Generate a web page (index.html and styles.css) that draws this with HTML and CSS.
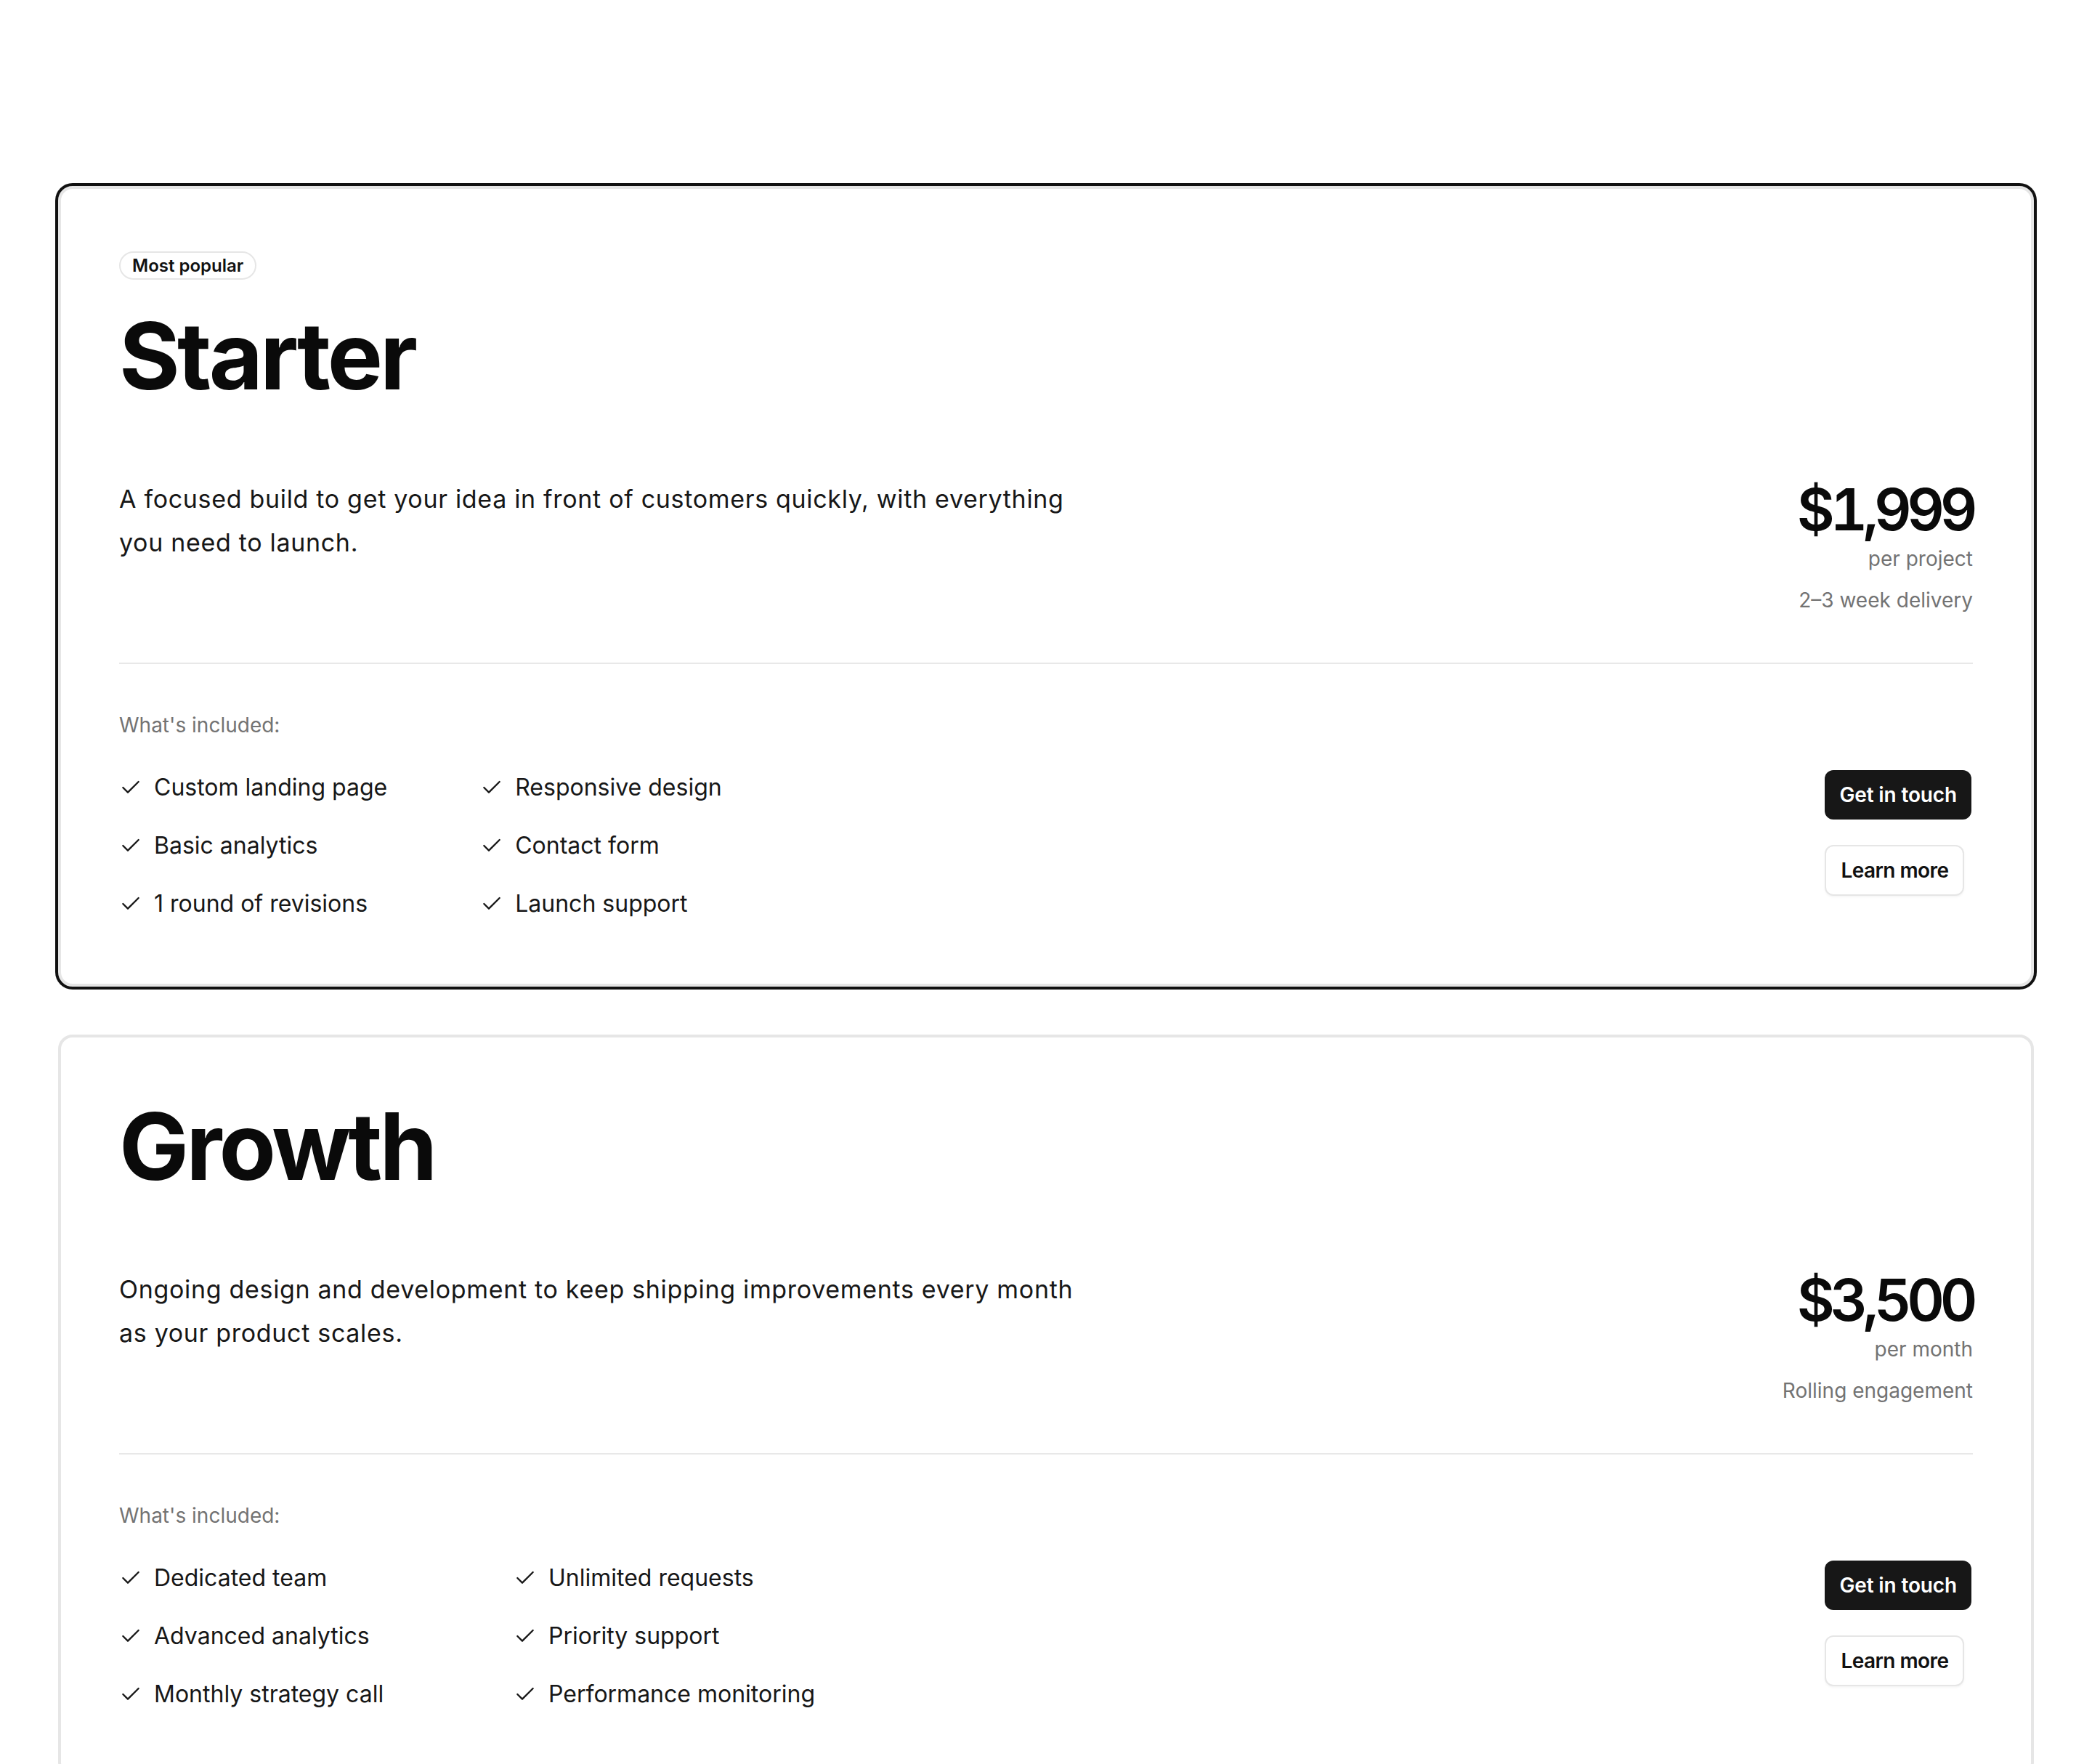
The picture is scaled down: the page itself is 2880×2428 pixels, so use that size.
FILE: index.html
```html
<!doctype html>
<html>
<head>
<meta charset="utf-8">
<title>Plans</title>
    <link rel="stylesheet" href="styles.css">
</head>
<body>
<div class="plans">
    <div class="plan plan-featured">
        <span class="plan-badge">Most popular</span>
        <h2 class="plan-name">Starter</h2>
        <div class="plan-head">
            <p class="plan-desc">A focused build to get your idea in front of customers quickly, with everything you need to launch.</p>
            <div class="plan-price">
                <div class="price-num">$1,999</div>
                <div class="price-unit">per project</div>
                <div class="price-note">2–3 week delivery</div>
            </div>
        </div>
        <div class="plan-line"></div>
        <p class="include-title">What's included:</p>
        <div class="include-row">
            <ul class="include-list">
                <li><svg class="ico-check" viewBox="0 0 24 24"><path d="M20 6 9 17l-5-5"/></svg>Custom landing page</li>
                <li><svg class="ico-check" viewBox="0 0 24 24"><path d="M20 6 9 17l-5-5"/></svg>Responsive design</li>
                <li><svg class="ico-check" viewBox="0 0 24 24"><path d="M20 6 9 17l-5-5"/></svg>Basic analytics</li>
                <li><svg class="ico-check" viewBox="0 0 24 24"><path d="M20 6 9 17l-5-5"/></svg>Contact form</li>
                <li><svg class="ico-check" viewBox="0 0 24 24"><path d="M20 6 9 17l-5-5"/></svg>1 round of revisions</li>
                <li><svg class="ico-check" viewBox="0 0 24 24"><path d="M20 6 9 17l-5-5"/></svg>Launch support</li>
            </ul>
            <div class="plan-actions">
                <a class="btn btn-dark" href="#">Get in touch</a>
                <a class="btn btn-light" href="#">Learn more</a>
            </div>
        </div>
    </div>

    <div class="plan">
        <h2 class="plan-name">Growth</h2>
        <div class="plan-head">
            <p class="plan-desc">Ongoing design and development to keep shipping improvements every month as your product scales.</p>
            <div class="plan-price">
                <div class="price-num">$3,500</div>
                <div class="price-unit">per month</div>
                <div class="price-note">Rolling engagement</div>
            </div>
        </div>
        <div class="plan-line"></div>
        <p class="include-title">What's included:</p>
        <div class="include-row">
            <ul class="include-list">
                <li><svg class="ico-check" viewBox="0 0 24 24"><path d="M20 6 9 17l-5-5"/></svg>Dedicated team</li>
                <li><svg class="ico-check" viewBox="0 0 24 24"><path d="M20 6 9 17l-5-5"/></svg>Unlimited requests</li>
                <li><svg class="ico-check" viewBox="0 0 24 24"><path d="M20 6 9 17l-5-5"/></svg>Advanced analytics</li>
                <li><svg class="ico-check" viewBox="0 0 24 24"><path d="M20 6 9 17l-5-5"/></svg>Priority support</li>
                <li><svg class="ico-check" viewBox="0 0 24 24"><path d="M20 6 9 17l-5-5"/></svg>Monthly strategy call</li>
                <li><svg class="ico-check" viewBox="0 0 24 24"><path d="M20 6 9 17l-5-5"/></svg>Performance monitoring</li>
            </ul>
            <div class="plan-actions">
                <a class="btn btn-dark" href="#">Get in touch</a>
                <a class="btn btn-light" href="#">Learn more</a>
            </div>
        </div>
    </div>
</div>
</body>
</html>
```

FILE: styles.css
```css
html{background:#fff;color:#0a0a0a;}
body,div,ul,li,h2,p{margin:0;padding:0;}
body{font-family:Inter,"Noto Sans",sans-serif;-webkit-font-smoothing:antialiased;}
ul,li{list-style:none;}

.plans{padding:256px 80px 80px;display:flex;flex-direction:column;gap:66px;}
.plan{border:4px solid #e6e6e6;border-radius:20px;padding:86px 80px;background:#fff;}
.plan-featured{box-shadow:0 0 0 4px #111;}

.plan-badge{display:block;width:fit-content;border:2px solid #e6e6e6;border-radius:999px;padding:2px 16px;font-size:24px;line-height:31px;font-weight:600;color:#111;margin-bottom:41px;}
.plan-name{font-size:128px;line-height:128px;font-weight:700;letter-spacing:-0.03em;color:#0a0a0a;margin-bottom:103px;}

.plan-head{display:flex;justify-content:space-between;align-items:flex-start;}
.plan-desc{max-width:1340px;font-size:34px;line-height:60px;letter-spacing:0.02em;color:#171717;}
.plan-price{text-align:right;}
.price-num{font-size:80px;line-height:88px;font-weight:600;letter-spacing:-0.08em;font-variant-numeric:tabular-nums;color:#0a0a0a;}
.price-unit{font-size:28px;line-height:40px;color:#737373;margin-top:4px;}
.price-note{font-size:28px;line-height:40px;color:#737373;margin-top:17px;}

.plan-line{height:2px;background:#e8e8e8;margin:66px 0 64px;}

.include-title{font-size:28px;line-height:40px;color:#737373;margin-bottom:42px;}
.include-row{display:flex;justify-content:space-between;align-items:flex-start;padding-right:2px;}
.include-list{display:grid;grid-template-columns:repeat(2,1fr);column-gap:128px;row-gap:32px;}
.include-list li{display:flex;align-items:center;gap:16px;font-size:32px;line-height:48px;color:#171717;white-space:nowrap;}
.ico-check{width:32px;height:32px;flex:none;fill:none;stroke:#171717;stroke-width:1.75;stroke-linecap:round;stroke-linejoin:round;}

.plan-actions{display:flex;flex-direction:column;align-items:flex-start;gap:35px;}
.btn{display:block;font-size:28px;line-height:40px;font-weight:600;border-radius:12px;padding:14px 20px;text-decoration:none;letter-spacing:-0.005em;}
.btn-dark{background:#171717;color:#fff;}
.btn-light{background:#fff;color:#111;border:2px solid #e6e6e6;padding:13px 20px;letter-spacing:-0.02em;box-shadow:0 2px 3px rgba(0,0,0,0.04);}
```
